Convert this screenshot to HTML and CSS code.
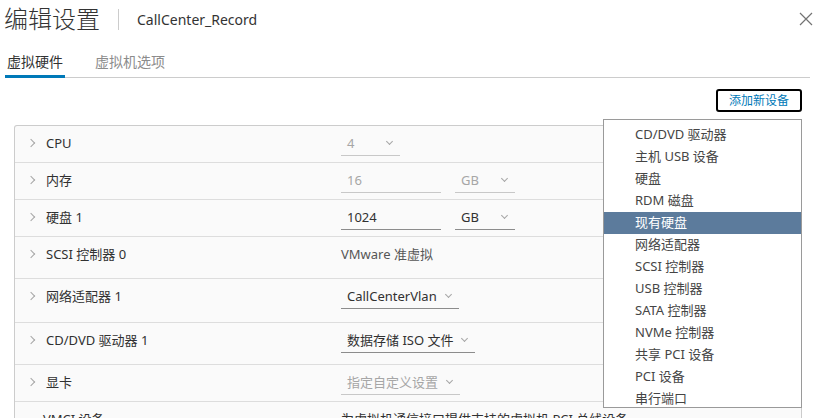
FILE: index.html
```html
<!DOCTYPE html>
<html lang="zh-CN">
<head>
    <meta charset="UTF-8">
    <title>编辑设置</title>
    <link rel="stylesheet" href="styles.css">
</head>
<body>
    <div class="modal">
        <div class="modal-header">
            <h2 class="modal-title">编辑设置</h2>
            <span class="title-sep"></span>
            <span class="vm-name">CallCenter_Record</span>
            <svg class="close-btn" viewBox="0 0 14 14" width="14" height="14">
                <path d="M1 1L13 13M13 1L1 13" stroke="#737373" stroke-width="1.2" fill="none"/>
            </svg>
        </div>

        <!-- 选项卡 -->
        <div class="tabs">
            <span class="tab active">虚拟硬件</span>
            <span class="tab">虚拟机选项</span>
        </div>

        <div class="toolbar">
            <button class="add-btn">添加新设备</button>
        </div>

        <!-- 硬件列表 -->
        <div class="hw-table">
            <div class="hw-row first">
                <div class="hw-label"><span class="caret"></span>CPU</div>
                <div class="hw-value">
                    <span class="select disabled w-cpu">4<span class="chev"></span></span>
                </div>
            </div>
            <div class="hw-row">
                <div class="hw-label"><span class="caret"></span>内存</div>
                <div class="hw-value">
                    <span class="input disabled">16</span>
                    <span class="select disabled w-unit">GB<span class="chev"></span></span>
                </div>
            </div>
            <div class="hw-row">
                <div class="hw-label"><span class="caret"></span>硬盘 1</div>
                <div class="hw-value">
                    <span class="input">1024</span>
                    <span class="select w-unit">GB<span class="chev"></span></span>
                </div>
            </div>
            <div class="hw-row h42">
                <div class="hw-label"><span class="caret"></span>SCSI 控制器 0</div>
                <div class="hw-value"><span class="plain muted">VMware 准虚拟</span></div>
            </div>
            <div class="hw-row h44">
                <div class="hw-label"><span class="caret"></span>网络适配器 1</div>
                <div class="hw-value">
                    <span class="select">CallCenterVlan<span class="chev"></span></span>
                </div>
            </div>
            <div class="hw-row h42">
                <div class="hw-label"><span class="caret"></span>CD/DVD 驱动器 1</div>
                <div class="hw-value">
                    <span class="select">数据存储 ISO 文件<span class="chev"></span></span>
                </div>
            </div>
            <div class="hw-row">
                <div class="hw-label"><span class="caret"></span>显卡</div>
                <div class="hw-value">
                    <span class="select disabled">指定自定义设置<span class="chev"></span></span>
                </div>
            </div>
            <div class="hw-row">
                <div class="hw-label no-caret">VMCI 设备</div>
                <div class="hw-value"><span class="plain">为虚拟机通信接口提供支持的虚拟机 PCI 总线设备</span></div>
            </div>
        </div>

        <!-- 添加新设备菜单 -->
        <div class="dropdown-menu">
            <div class="menu-item">CD/DVD 驱动器</div>
            <div class="menu-item">主机 USB 设备</div>
            <div class="menu-item">硬盘</div>
            <div class="menu-item">RDM 磁盘</div>
            <div class="menu-item selected">现有硬盘</div>
            <div class="menu-item">网络适配器</div>
            <div class="menu-item">SCSI 控制器</div>
            <div class="menu-item">USB 控制器</div>
            <div class="menu-item">SATA 控制器</div>
            <div class="menu-item">NVMe 控制器</div>
            <div class="menu-item">共享 PCI 设备</div>
            <div class="menu-item">PCI 设备</div>
            <div class="menu-item">串行端口</div>
        </div>
    </div>
</body>
</html>
```

FILE: styles.css
```css
body {
    margin: 0;
    font-family: "Noto Sans", "Noto Sans CJK SC", sans-serif;
    color: #313131;
    background-color: #fff;
    overflow: hidden;
}
.modal {
    position: relative;
    height: 418px;
}
.modal-header {
    display: flex;
    align-items: center;
    height: 38px;
    padding: 0 3px 0 4px;
}
.modal-title {
    margin: 0;
    font-size: 24px;
    font-weight: 300;
    line-height: 38px;
    color: #333;
}
.title-sep {
    width: 1px;
    height: 21px;
    background-color: #ccc;
    margin: 0 18px 0 18px;
}
.vm-name {
    font-size: 14px;
    color: #333;
}
.close-btn {
    margin-left: auto;
}
.tabs {
    display: flex;
    gap: 28px;
    margin: 0 6px 0 5px;
    box-shadow: inset 0 -1px 0 #ccc;
}
.tab {
    padding: 14px 2px 6px;
    font-size: 14px;
    line-height: 20px;
    color: #8c8c8c;
}
.tab.active {
    color: #313131;
    box-shadow: inset 0 -3px 0 #0079b8;
}
.toolbar {
    display: flex;
    justify-content: flex-end;
    padding: 11px 14px 0;
}
.add-btn {
    height: 23px;
    padding: 0 11px;
    font-family: inherit;
    font-size: 12px;
    line-height: 19px;
    color: #0079b8;
    background-color: #fff;
    border: 2px solid #000;
    border-radius: 3px;
}
.hw-table {
    margin: 13px 14px 0;
    border: 1px solid #ccc;
    border-bottom: none;
    border-radius: 3px 3px 0 0;
    background-color: #fafafa;
}
.hw-row {
    display: flex;
    box-sizing: border-box;
    height: 37px;
    border-top: 1px solid #ddd;
}
.hw-row.first {
    height: 36px;
    border-top: none;
}
.hw-row.h42 {
    height: 42px;
}
.hw-row.h44 {
    height: 44px;
}
.hw-label {
    display: flex;
    align-items: center;
    width: 311px;
    height: 20px;
    padding: 7px 0 0 15px;
    font-size: 13px;
    line-height: 20px;
}
.hw-label.no-caret {
    padding-left: 28px;
    width: 298px;
}
.caret {
    width: 5px;
    height: 5px;
    margin: 0 10px 0 0;
    border-top: 1px solid #a6a6a6;
    border-right: 1px solid #a6a6a6;
    transform: translateX(-2px) rotate(45deg);
}
.hw-value {
    display: flex;
    gap: 14px;
    padding-top: 7px;
    font-size: 13px;
    line-height: 20px;
}
.input,
.select {
    display: inline-flex;
    align-items: center;
    height: 20px;
    padding: 0 7px 2px 6px;
    border-bottom: 1px solid #8c8c8c;
}
.input {
    width: 87px;
}
.select {
    gap: 9px;
}
.w-cpu {
    width: 46px;
}
.w-unit {
    width: 47px;
}
.w-cpu .chev,
.w-unit .chev {
    margin-left: auto;
}
.disabled {
    color: #a6a6a6;
    border-bottom-color: #c8c8c8;
}
.chev {
    width: 4px;
    height: 4px;
    margin: 0 1px 3px 0;
    border-right: 1px solid #a6a6a6;
    border-bottom: 1px solid #a6a6a6;
    transform: rotate(45deg);
}
.plain {
    white-space: nowrap;
}
.muted {
    color: #565656;
}
.dropdown-menu {
    position: absolute;
    left: 603px;
    top: 119px;
    box-sizing: border-box;
    width: 199px;
    height: 289px;
    padding-top: 4px;
    overflow: hidden;
    background-color: #fff;
    border: 1px solid #9a9a9a;
}
.menu-item {
    height: 22px;
    padding-left: 31px;
    font-size: 13px;
    line-height: 21px;
    color: #454545;
    white-space: nowrap;
}
.menu-item.selected {
    color: #fff;
    background-color: #5c7b9c;
}
```
